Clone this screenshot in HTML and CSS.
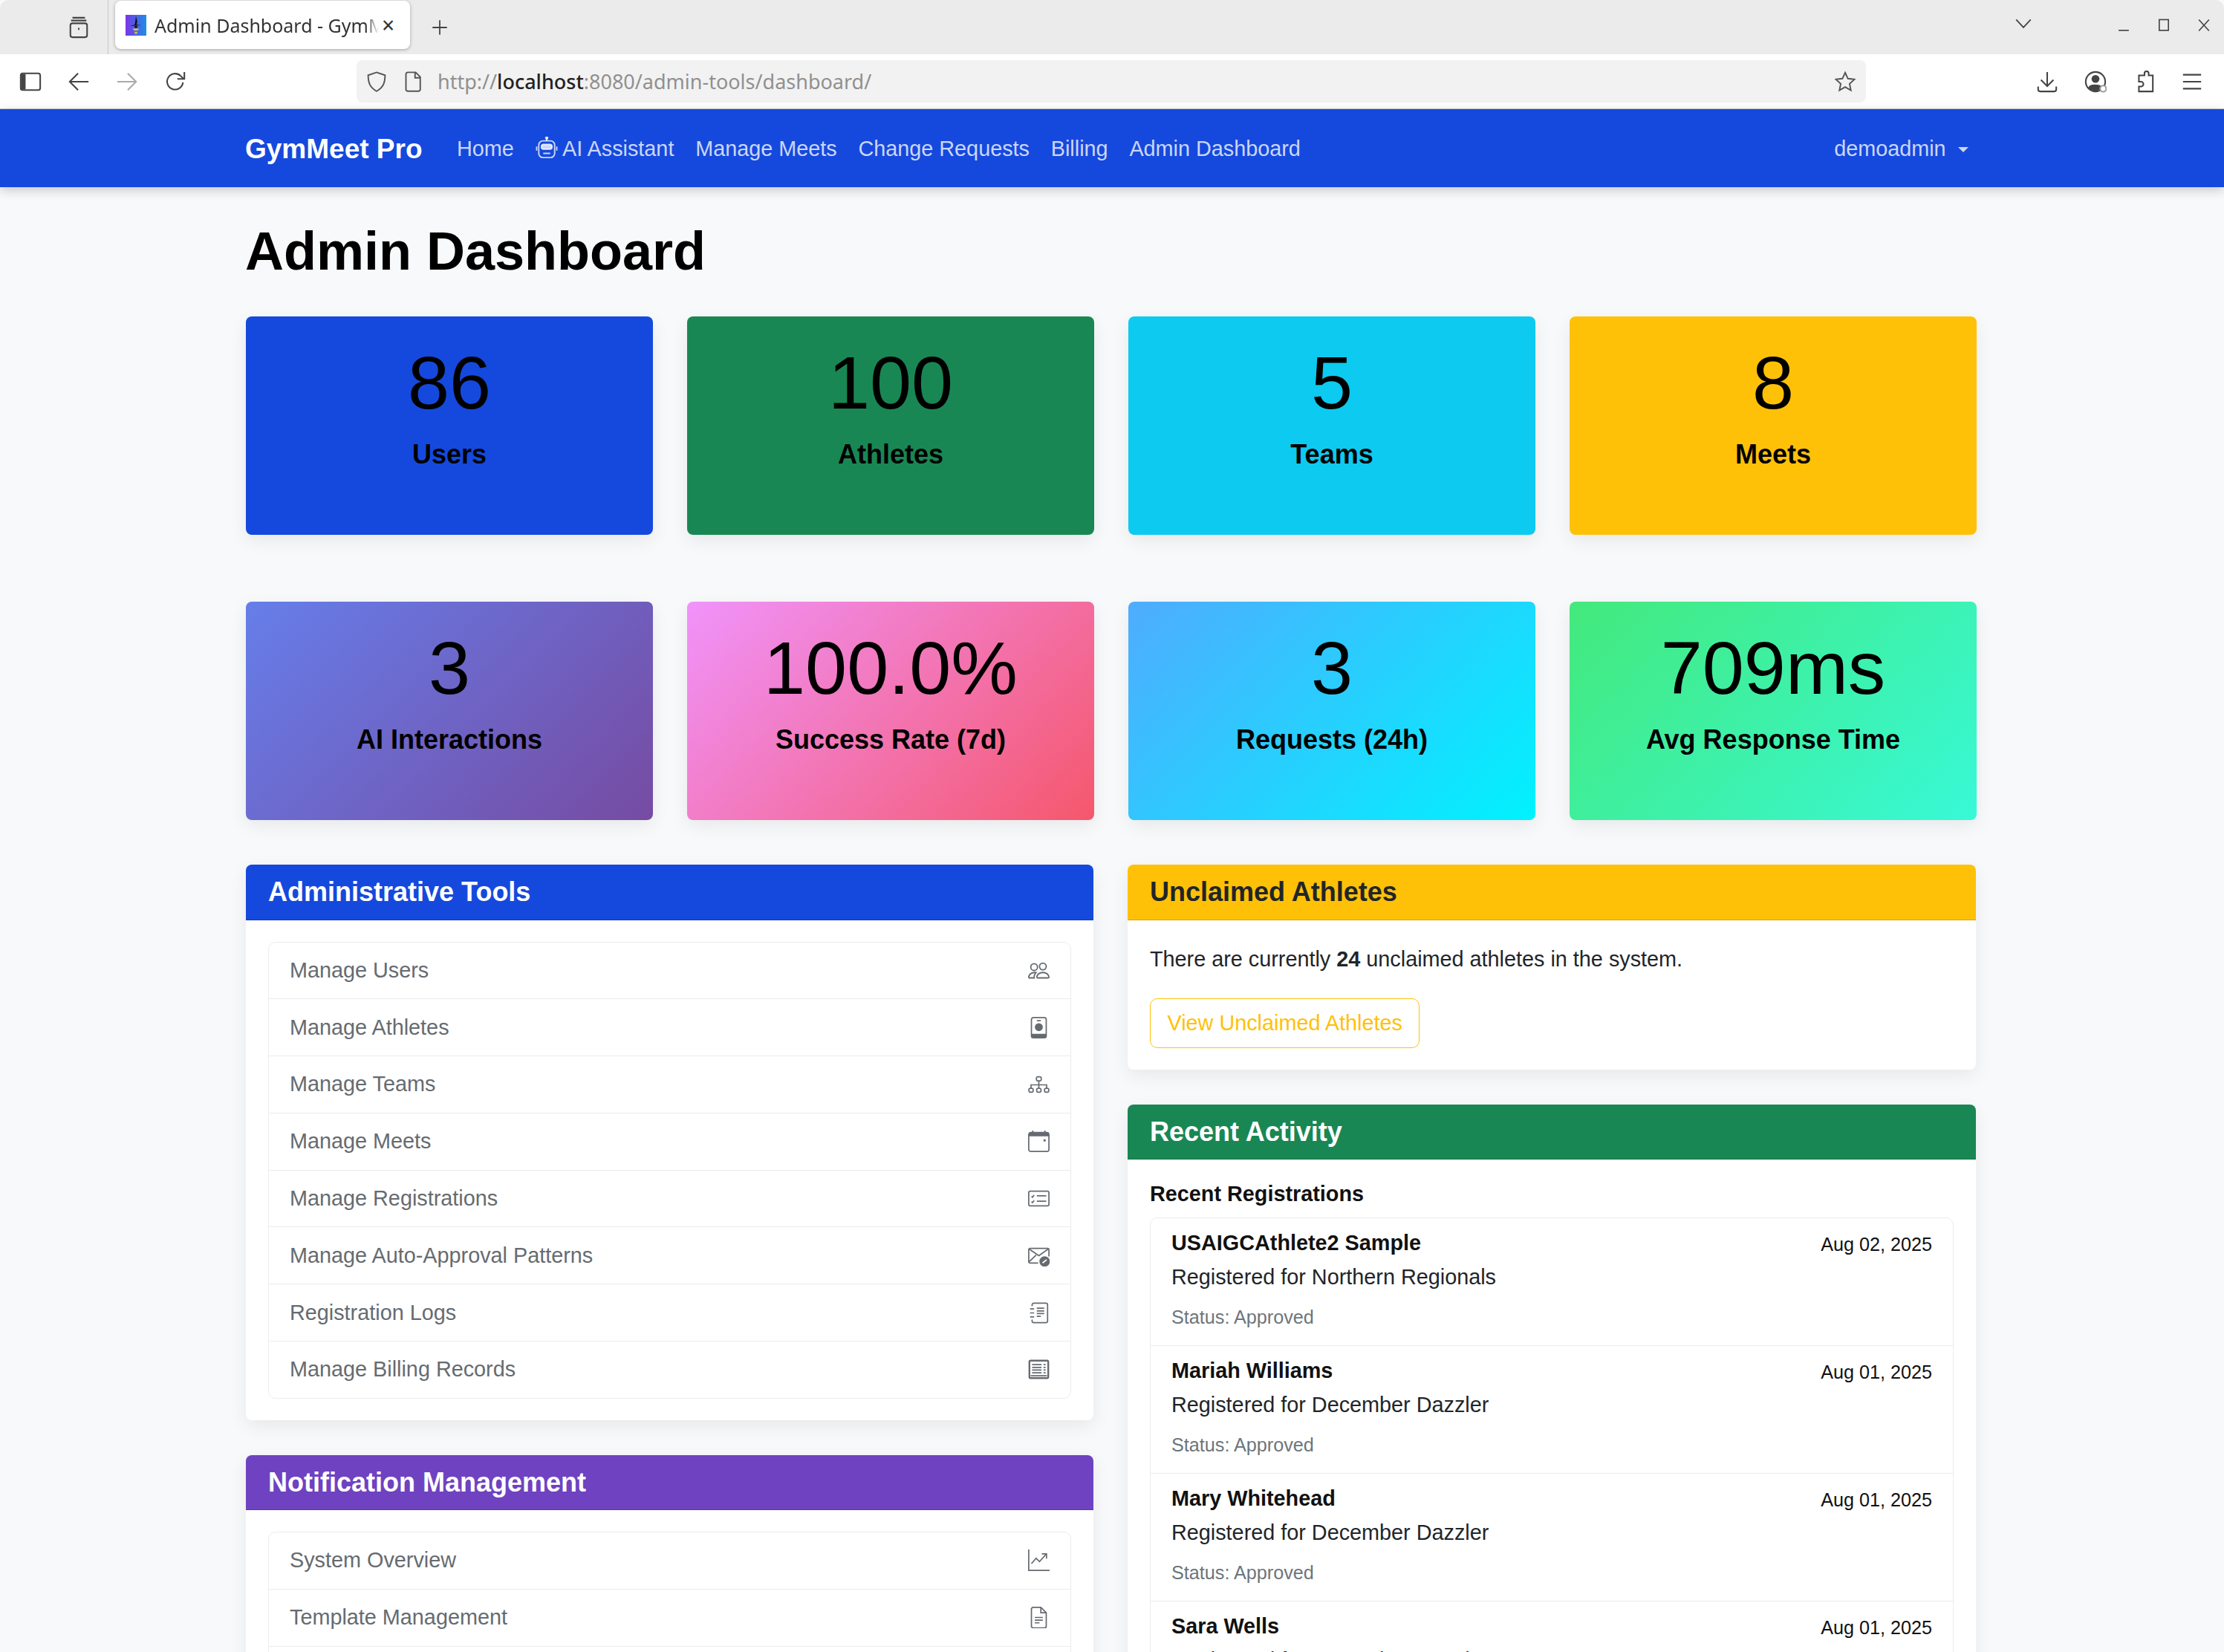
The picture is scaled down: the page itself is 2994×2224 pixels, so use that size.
FILE: index.html
```html
<!DOCTYPE html>
<html lang="en">
<head>
    <meta charset="UTF-8">
    <meta name="viewport" content="width=device-width, initial-scale=1.0">
    <title>Admin Dashboard - GymMeet Pro</title>
    <link rel="stylesheet" href="styles.css">
</head>
<body>

    <!-- icon sprite -->
    <svg class="sprite" xmlns="http://www.w3.org/2000/svg">
        <symbol id="i-people" viewBox="0 0 16 16">
            <path fill="currentColor" stroke="none" d="M15 14s1 0 1-1-1-4-5-4-5 3-5 4 1 1 1 1h8Zm-7.978-1A.261.261 0 0 1 7 12.996c.001-.264.167-1.03.76-1.72C8.312 10.629 9.282 10 11 10c1.717 0 2.687.63 3.24 1.276.593.69.758 1.457.76 1.72l-.008.002a.274.274 0 0 1-.014.002H7.022ZM11 7a2 2 0 1 0 0-4 2 2 0 0 0 0 4Zm3-2a3 3 0 1 1-6 0 3 3 0 0 1 6 0ZM6.936 9.28a5.88 5.88 0 0 0-1.23-.247A7.35 7.35 0 0 0 5 9c-4 0-5 3-5 4 0 .667.333 1 1 1h4.216A2.238 2.238 0 0 1 5 13c0-1.01.377-2.042 1.09-2.904.243-.294.526-.569.846-.816ZM4.920 10A5.493 5.493 0 0 0 4 13H1c0-.26.164-1.03.76-1.724.545-.636 1.492-1.256 3.16-1.275ZM1.500 5.500a3 3 0 1 1 6 0 3 3 0 0 1-6 0Zm3-2a2 2 0 1 0 0 4 2 2 0 0 0 0-4Z"/>
        </symbol>
        <symbol id="i-badge" viewBox="0 0 16 16">
            <rect x="2.500" y=".5" width="11" height="15" rx="1.500"/>
            <path d="M6.500 2.800h3"/>
            <circle cx="8" cy="7.600" r="2.500" fill="currentColor"/>
            <path fill="currentColor" d="M3 15v-2h10v2z"/>
        </symbol>
        <symbol id="i-diagram" viewBox="0 0 16 16">
            <rect x="6.200" y="2" width="3.600" height="3" rx="1.200"/>
            <path d="M8 5V8M2.200 10.500V8h11.600v2.500M8 8v2.500"/>
            <rect x=".6" y="10.500" width="3.200" height="3" rx="1.200"/>
            <rect x="6.400" y="10.500" width="3.200" height="3" rx="1.200"/>
            <rect x="12.200" y="10.500" width="3.200" height="3" rx="1.200"/>
        </symbol>
        <symbol id="i-calendar" viewBox="0 0 16 16">
            <rect x=".5" y="1.500" width="15" height="14" rx="1.500"/>
            <path fill="currentColor" d="M1 2h14v1.800H1z"/>
            <path d="M3.500 0v2M12.500 0v2"/>
            <rect x="11.500" y="6.500" width="1.600" height="1.600" fill="currentColor" stroke="none"/>
        </symbol>
        <symbol id="i-checklist" viewBox="0 0 16 16">
            <rect x=".5" y="2.500" width="15" height="11" rx="1.200"/>
            <path d="M6.500 6H13.500M6.500 10H13.500M2.500 6.400l.8.6 1.200-1.600M2.500 10.400l.8.6 1.200-1.600"/>
        </symbol>
        <symbol id="i-envelope" viewBox="0 0 16 16">
            <path d="M7.500 13.500H1.500a1 1 0 0 1-1-1v-9a1 1 0 0 1 1-1h13a1 1 0 0 1 1 1v5"/>
            <path d="M.8 3 8 8l7-5M.8 12.500 6 7.500"/>
            <circle cx="12.300" cy="12.300" r="3.400" fill="currentColor"/>
            <path stroke="#fff" d="M10.800 13.400 13.800 11"/>
        </symbol>
        <symbol id="i-journal" viewBox="0 0 16 16">
            <path d="M3 3V2a1.200 1.200 0 0 1 1.200-1.200h9.100A1.200 1.200 0 0 1 14.500 2v12a1.200 1.200 0 0 1-1.200 1.200H4.200A1.200 1.200 0 0 1 3 14v-1"/>
            <path d="M1.500 5h3M1.500 8h3M1.500 11h3M6.500 4.500h5.500M6.500 6.500h5.500M6.500 8.500h5.500M6.500 10.500h3"/>
        </symbol>
        <symbol id="i-records" viewBox="0 0 16 16">
            <rect x="1" y="1.500" width="14" height="13" rx=".8" stroke-width="1.300"/>
            <path d="M3 4.500h7M3 6.500h7M3 8.500h7M3 10.500h7M11.500 4.500h1.500M11.500 6.500h1.500M11.500 8.500h1.500M11.500 10.500h1.500"/>
            <path d="M2 12.800h12" stroke-width="1"/>
        </symbol>
        <symbol id="i-graph" viewBox="0 0 16 16">
            <path d="M.5 0V15.500H16"/>
            <path d="M2.500 10.500 6 6.500l2.500 2.500 4.700-5.300"/>
            <path d="M10.200 3.300h3.500v3.500"/>
        </symbol>
        <symbol id="i-file" viewBox="0 0 16 16">
            <path d="M3.800.5h5.700l4 4v10a1.300 1.300 0 0 1-1.300 1.300H3.800a1.300 1.300 0 0 1-1.300-1.300V1.800A1.300 1.300 0 0 1 3.800.5z"/>
            <path d="M9.500.5v4h4M5 8h6M5 10h6M5 12h3.500"/>
        </symbol>
        <symbol id="i-robot" viewBox="0 0 16 16">
            <path d="M8 3V1"/>
            <circle cx="8" cy=".9" r=".7" fill="currentColor"/>
            <rect x="2.300" y="3" width="11.400" height="12" rx="3"/>
            <rect x="4.200" y="5.600" width="7.600" height="3.400" rx="1.500" fill="currentColor"/>
            <path d="M5.500 12h5M.8 7v3M15.200 7v3"/>
        </symbol>
    </svg>

    <!-- browser window top -->
    <div class="browser">
        <div class="tabbar">
            <div class="tool-btn archive">
                <svg class="tool-icon" viewBox="0 0 16 16"><path d="M3.500 1h9M2.500 3h11"/><rect x="2" y="5" width="12" height="10" rx="1.500"/><path d="M7.500 9h1" stroke-width="1.500"/></svg>
            </div>
            <div class="tab-sep"></div>
            <div class="tab">
                <svg class="favicon" viewBox="0 0 16 16">
                    <defs><linearGradient id="fav" x1="0" x2="1" y1="0" y2="0"><stop offset="0" stop-color="#7a35e8"/><stop offset="1" stop-color="#1d8ee8"/></linearGradient></defs>
                    <rect width="16" height="16" fill="url(#fav)"/>
                    <path d="M8 1 7.500 5 7 7.500 3.500 8.500 12 8 8.500 7.500 9 5zM7 8.500h2v1.500H7z" fill="#111"/>
                    <path d="M5.500 10.500h5L9.500 12h-3zM7 13h2v1.500H7z" fill="#d8c23a"/>
                </svg>
                <span class="tab-title">Admin Dashboard - GymMeet Pro</span>
                <span class="tab-close">×</span>
            </div>
            <div class="tool-btn new-tab">
                <svg class="tool-icon" viewBox="0 0 16 16"><path d="M8 2v12M2 8h12"/></svg>
            </div>
            <div class="tool-btn tab-list">
                <svg class="tool-icon" viewBox="0 0 16 16"><path d="M2 4.500 8 11l6-6.500"/></svg>
            </div>
            <div class="win-btn"><svg class="win-icon" viewBox="0 0 16 16"><path d="M3 13h10"/></svg></div>
            <div class="win-btn"><svg class="win-icon" viewBox="0 0 16 16"><rect x="3.500" y="2.500" width="9" height="10.500"/></svg></div>
            <div class="win-btn"><svg class="win-icon" viewBox="0 0 16 16"><path d="m3 2.500 10 11M13 2.500l-10 11"/></svg></div>
        </div>
        <div class="toolbar">
            <div class="tool-btn"><svg class="tool-icon" viewBox="0 0 16 16"><rect x="1" y="2" width="14" height="12" rx="1.500"/><path d="M3 2.500v11" stroke-width="3"/></svg></div>
            <div class="tool-btn"><svg class="tool-icon" viewBox="0 0 16 16"><path d="M15 8H1.500M7.500 2 1.500 8l6 6"/></svg></div>
            <div class="tool-btn dim"><svg class="tool-icon" viewBox="0 0 16 16"><path d="M1 8h13.500M8.500 2l6 6-6 6"/></svg></div>
            <div class="tool-btn"><svg class="tool-icon" viewBox="0 0 16 16"><path d="M13.500 8.500A5.700 5.700 0 1 1 11.800 3.800L14 6"/><path d="M14.500 1v5h-5"/></svg></div>
            <div class="urlbar">
                <svg class="url-icon shield" viewBox="0 0 16 16"><path d="M8 .8 14.500 3c0 6-1.500 9.500-6.500 12.300C3 12.500 1.500 9 1.500 3z"/></svg>
                <svg class="url-icon page" viewBox="0 0 16 16"><path d="M3.500.8h6l3.500 3.500v9.500a1.500 1.500 0 0 1-1.500 1.500h-8A1.500 1.500 0 0 1 2 13.800V2.300A1.500 1.500 0 0 1 3.500.8zM9 1v4h4"/></svg>
                <span class="url-text">http://<b>localhost</b>:8080/admin-tools/dashboard/</span>
                <svg class="url-icon star" viewBox="0 0 16 16"><path d="M8 1l2.100 4.600 5 .6-3.700 3.400 1 5L8 12.100 3.600 14.600l1-5L.9 6.200l5-.6z"/></svg>
            </div>
            <div class="tool-btn download"><svg class="tool-icon" viewBox="0 0 16 16"><path d="M8 1v10M3.500 6.700 8 11.200l4.500-4.500M1.500 11.500v2a1.500 1.500 0 0 0 1.500 1.500h10a1.500 1.500 0 0 0 1.500-1.500v-2"/></svg></div>
            <div class="tool-btn"><svg class="tool-icon" viewBox="0 0 16 16"><circle cx="8" cy="8" r="7"/><circle cx="8" cy="6" r="2.300" fill="currentColor"/><path d="M3.500 12c1-2 7-2 9 0-2 2.500-7 2.500-9 0z" fill="currentColor"/><circle cx="13.500" cy="13" r="2.200" fill="#fff" stroke="#999"/></svg></div>
            <div class="tool-btn"><svg class="tool-icon" viewBox="0 0 16 16"><path d="M6.500 3.500h2V2a1.500 1.500 0 0 1 3 0v1.500h3v11.500h-10v-3.500H6a1.700 1.700 0 0 0 0-3.500H4.500V3.500z"/></svg></div>
            <div class="tool-btn"><svg class="tool-icon" viewBox="0 0 16 16"><path d="M1.500 3h13M1.500 8h13M1.500 13h13"/></svg></div>
        </div>
    </div>

    <!-- navbar -->
    <nav class="navbar">
        <a class="brand">GymMeet Pro</a>
        <a class="nav-link">Home</a>
        <a class="nav-link"><svg class="robot"><use href="#i-robot"/></svg> AI Assistant</a>
        <a class="nav-link">Manage Meets</a>
        <a class="nav-link">Change Requests</a>
        <a class="nav-link">Billing</a>
        <a class="nav-link">Admin Dashboard</a>
        <a class="nav-link user-menu">demoadmin <span class="caret"></span></a>
    </nav>

    <main class="container">
        <h1 class="page-title">Admin Dashboard</h1>

        <div class="stat-row">
            <div class="stat-card bg-primary"><div class="stat-num">86</div><div class="stat-label">Users</div></div>
            <div class="stat-card bg-success"><div class="stat-num">100</div><div class="stat-label">Athletes</div></div>
            <div class="stat-card bg-info"><div class="stat-num">5</div><div class="stat-label">Teams</div></div>
            <div class="stat-card bg-warning"><div class="stat-num">8</div><div class="stat-label">Meets</div></div>
        </div>

        <div class="stat-row stat-row-ai">
            <div class="stat-card grad-purple"><div class="stat-num">3</div><div class="stat-label">AI Interactions</div></div>
            <div class="stat-card grad-pink"><div class="stat-num">100.0%</div><div class="stat-label">Success Rate (7d)</div></div>
            <div class="stat-card grad-blue"><div class="stat-num">3</div><div class="stat-label">Requests (24h)</div></div>
            <div class="stat-card grad-green"><div class="stat-num">709ms</div><div class="stat-label">Avg Response Time</div></div>
        </div>

        <div class="panels">
            <div class="panel-col">
                <section class="panel">
                    <h5 class="panel-head bg-primary light">Administrative Tools</h5>
                    <div class="panel-body">
                        <ul class="list">
                            <li class="list-item">Manage Users <svg class="icon"><use href="#i-people"/></svg></li>
                            <li class="list-item">Manage Athletes <svg class="icon"><use href="#i-badge"/></svg></li>
                            <li class="list-item">Manage Teams <svg class="icon"><use href="#i-diagram"/></svg></li>
                            <li class="list-item">Manage Meets <svg class="icon"><use href="#i-calendar"/></svg></li>
                            <li class="list-item">Manage Registrations <svg class="icon"><use href="#i-checklist"/></svg></li>
                            <li class="list-item">Manage Auto-Approval Patterns <svg class="icon"><use href="#i-envelope"/></svg></li>
                            <li class="list-item">Registration Logs <svg class="icon"><use href="#i-journal"/></svg></li>
                            <li class="list-item">Manage Billing Records <svg class="icon"><use href="#i-records"/></svg></li>
                        </ul>
                    </div>
                </section>

                <section class="panel">
                    <h5 class="panel-head bg-purple light">Notification Management</h5>
                    <div class="panel-body">
                        <ul class="list">
                            <li class="list-item">System Overview <svg class="icon"><use href="#i-graph"/></svg></li>
                            <li class="list-item">Template Management <svg class="icon"><use href="#i-file"/></svg></li>
                            <li class="list-item">&nbsp;</li>
                        </ul>
                    </div>
                </section>
            </div>

            <div class="panel-col">
                <section class="panel">
                    <h5 class="panel-head bg-warning">Unclaimed Athletes</h5>
                    <div class="panel-body unclaimed">
                        <p class="unclaimed-text">There are currently <strong>24</strong> unclaimed athletes in the system.</p>
                        <a class="btn-outline">View Unclaimed Athletes</a>
                    </div>
                </section>

                <section class="panel">
                    <h5 class="panel-head bg-success light">Recent Activity</h5>
                    <div class="panel-body">
                        <h6 class="sub-head">Recent Registrations</h6>
                        <div class="list">
                            <div class="activity">
                                <div class="activity-top"><strong>USAIGCAthlete2 Sample</strong><small>Aug 02, 2025</small></div>
                                <p>Registered for Northern Regionals</p>
                                <small class="status">Status: Approved</small>
                            </div>
                            <div class="activity">
                                <div class="activity-top"><strong>Mariah Williams</strong><small>Aug 01, 2025</small></div>
                                <p>Registered for December Dazzler</p>
                                <small class="status">Status: Approved</small>
                            </div>
                            <div class="activity">
                                <div class="activity-top"><strong>Mary Whitehead</strong><small>Aug 01, 2025</small></div>
                                <p>Registered for December Dazzler</p>
                                <small class="status">Status: Approved</small>
                            </div>
                            <div class="activity">
                                <div class="activity-top"><strong>Sara Wells</strong><small>Aug 01, 2025</small></div>
                                <p>Registered for December Dazzler</p>
                                <small class="status">Status: Approved</small>
                            </div>
                        </div>
                    </div>
                </section>
            </div>
        </div>
    </main>

</body>
</html>
```

FILE: styles.css
```css
html, body {
    height: 2224px;
    overflow: hidden;
}
body {
    margin: 0;
    font-family: "Liberation Sans", Arial, sans-serif;
    font-size: 28.8px;
    line-height: 1.5;
    color: #212529;
    background: #f8f9fa;
}
.sprite {
    display: none;
}

/* browser window */
.browser {
    height: 147px;
    font-family: "Noto Sans", sans-serif;
    color: #444;
}
.tabbar {
    height: 73px;
    display: flex;
    align-items: center;
    padding-left: 73px;
    background: #ebebeb;
    border-radius: 12px 12px 0 0;
}
.toolbar {
    height: 74px;
    box-sizing: border-box;
    display: flex;
    align-items: center;
    padding: 0 11px 0 8px;
    background: #fff;
    border-bottom: 1px solid #ccc;
}
.tool-btn {
    width: 65px;
    flex: none;
    display: flex;
    justify-content: center;
    align-items: center;
}
.tool-btn.dim {
    color: #aaa;
}
.tool-icon {
    width: 30px;
    height: 30px;
    fill: none;
    stroke: currentColor;
    stroke-width: 1.1;
}
.tab-sep {
    width: 1px;
    height: 73px;
    margin-left: 7px;
    background: #c8c8c8;
}
.tab {
    width: 397px;
    height: 65px;
    margin: 0 0 6px 9px;
    padding: 0 14px;
    box-sizing: border-box;
    display: flex;
    align-items: center;
    background: #fff;
    border-radius: 8px;
    box-shadow: 0 1px 4px rgba(0,0,0,.3);
}
.favicon {
    width: 28px;
    height: 30px;
    flex: none;
}
.tab-title {
    width: 302px;
    margin-left: 11px;
    padding-top: 2px;
    flex: none;
    overflow: hidden;
    white-space: nowrap;
    font-size: 25px;
    color: #333;
    -webkit-mask-image: linear-gradient(to right, #000 94%, transparent);
    mask-image: linear-gradient(to right, #000 94%, transparent);
}
.tab-close {
    margin-left: 4px;
    font-size: 30px;
    line-height: 1;
    color: #333;
}
.new-tab {
    margin-left: 7px;
}
.new-tab .tool-icon {
    width: 26px;
    height: 26px;
}
.tab-list {
    margin-left: auto;
    margin-right: 76px;
    margin-bottom: 10px;
}
.tab-list .tool-icon {
    width: 26px;
    height: 26px;
}
.win-btn {
    width: 54px;
    display: flex;
    justify-content: center;
    margin-bottom: 6px;
}
.win-icon {
    width: 22px;
    height: 22px;
    fill: none;
    stroke: #444;
    stroke-width: 1.2;
}
.urlbar {
    width: 2032px;
    height: 57px;
    margin-left: 212px;
    padding: 0 14px 0 13px;
    box-sizing: border-box;
    display: flex;
    align-items: center;
    background: #f2f2f2;
    border-radius: 8px;
    flex: none;
}
.url-icon {
    width: 28px;
    height: 30px;
    flex: none;
    fill: none;
    stroke: #555;
    stroke-width: 1.1;
}
.url-icon.page {
    margin-left: 22px;
}
.url-text {
    margin-left: 18px;
    padding-top: 2px;
    font-size: 27px;
    color: #909090;
}
.url-text b {
    font-weight: 500;
    color: #222;
}
.url-icon.star {
    margin-left: auto;
}
.download {
    margin-left: auto;
}

/* navbar */
.navbar {
    height: 105px;
    box-sizing: border-box;
    padding: 2px 330px 0 330px;
    display: flex;
    align-items: center;
    background: #1549dd;
    box-shadow: 0 4px 14px rgba(0,0,0,.2);
    position: relative;
}
.brand {
    margin-right: 32px;
    font-size: 37px;
    font-weight: bold;
    color: #fff;
}
.nav-link {
    padding: 0 14.4px;
    color: rgba(255,255,255,.78);
    white-space: nowrap;
}
.robot {
    width: 30px;
    height: 30px;
    vertical-align: -4px;
    fill: none;
    stroke: currentColor;
    stroke-width: 1;
}
.user-menu {
    margin-left: auto;
}
.caret {
    display: inline-block;
    margin-left: 8px;
    vertical-align: 5px;
    border-top: 7px solid;
    border-left: 7px solid transparent;
    border-right: 7px solid transparent;
}

/* page */
.container {
    padding: 43px 334px 0 331px;
}
.page-title {
    margin: 0 0 45px -1px;
    font-size: 72px;
    line-height: 1.2;
    color: #000;
}
.stat-row {
    display: grid;
    grid-template-columns: repeat(4, 548px);
    gap: 46px;
    margin-bottom: 90px;
}
.stat-row-ai {
    margin-bottom: 60px;
}
.stat-card {
    height: 294px;
    box-sizing: border-box;
    padding-top: 29px;
    text-align: center;
    color: #000;
    border-radius: 8px;
    box-shadow: 0 8px 24px rgba(0,0,0,.07);
}
.stat-num {
    margin-bottom: 14px;
    font-size: 100.8px;
    line-height: 1.2;
}
.stat-label {
    font-size: 36px;
    font-weight: bold;
    line-height: 1.2;
}
.bg-primary { background: #1549dd; }
.bg-success { background: #198754; }
.bg-info { background: #0dcaf0; }
.bg-warning { background: #ffc107; }
.bg-purple { background: #6f42c1; }
.grad-purple { background: linear-gradient(135deg, #667eea, #764ba2); }
.grad-pink { background: linear-gradient(135deg, #f093fb, #f5576c); }
.grad-blue { background: linear-gradient(135deg, #4facfe, #00f2fe); }
.grad-green { background: linear-gradient(135deg, #43e97b, #38f9d7); }

/* panels */
.panels {
    display: grid;
    grid-template-columns: 1141px 1142px;
    gap: 46px;
}
.panel {
    margin-bottom: 47px;
    background: #fff;
    border-radius: 8px;
    box-shadow: 0 8px 24px rgba(0,0,0,.07);
    overflow: hidden;
}
.panel-head {
    margin: 0;
    padding: 15px 30px;
    font-size: 36px;
    line-height: 1.2;
    color: #212529;
    border-bottom: 1px solid rgba(0,0,0,.15);
}
.panel-head.light {
    color: #fff;
}
.panel-body {
    padding: 29px 30px;
}
.unclaimed {
    padding-top: 31px;
}
.list {
    margin: 0;
    padding: 0;
    list-style: none;
    border: 1px solid #e9ecef;
    border-radius: 10px;
}
.list-item {
    display: flex;
    justify-content: space-between;
    align-items: center;
    padding: 16.3px 28px;
    color: #666b70;
    border-bottom: 1px solid #e9ecef;
}
.list-item:last-child {
    border-bottom: 0;
}
.icon {
    width: 29px;
    height: 29px;
    fill: none;
    stroke: currentColor;
    stroke-width: .95;
}
.unclaimed-text {
    margin: 0 0 31px;
}
.btn-outline {
    display: inline-block;
    padding: 10.8px 22.5px;
    color: #ffc107;
    border: 1px solid #ffc107;
    border-radius: 10px;
}
.sub-head {
    margin: 0 0 15px;
    font-size: 28.8px;
    line-height: 1.2;
    color: #111;
}
.activity {
    padding: 15px 28px 16.4px;
    border-bottom: 1px solid #e9ecef;
}
.activity-top {
    display: flex;
    justify-content: space-between;
    align-items: flex-start;
    color: #111;
}
.activity-top strong {
    line-height: 36px;
}
.activity-top small {
    margin-top: 5px;
    line-height: 31px;
}
.activity small {
    font-size: 25.2px;
}
.activity p {
    margin: 7px 0 10px;
}
.status {
    color: #6c757d;
}
```
